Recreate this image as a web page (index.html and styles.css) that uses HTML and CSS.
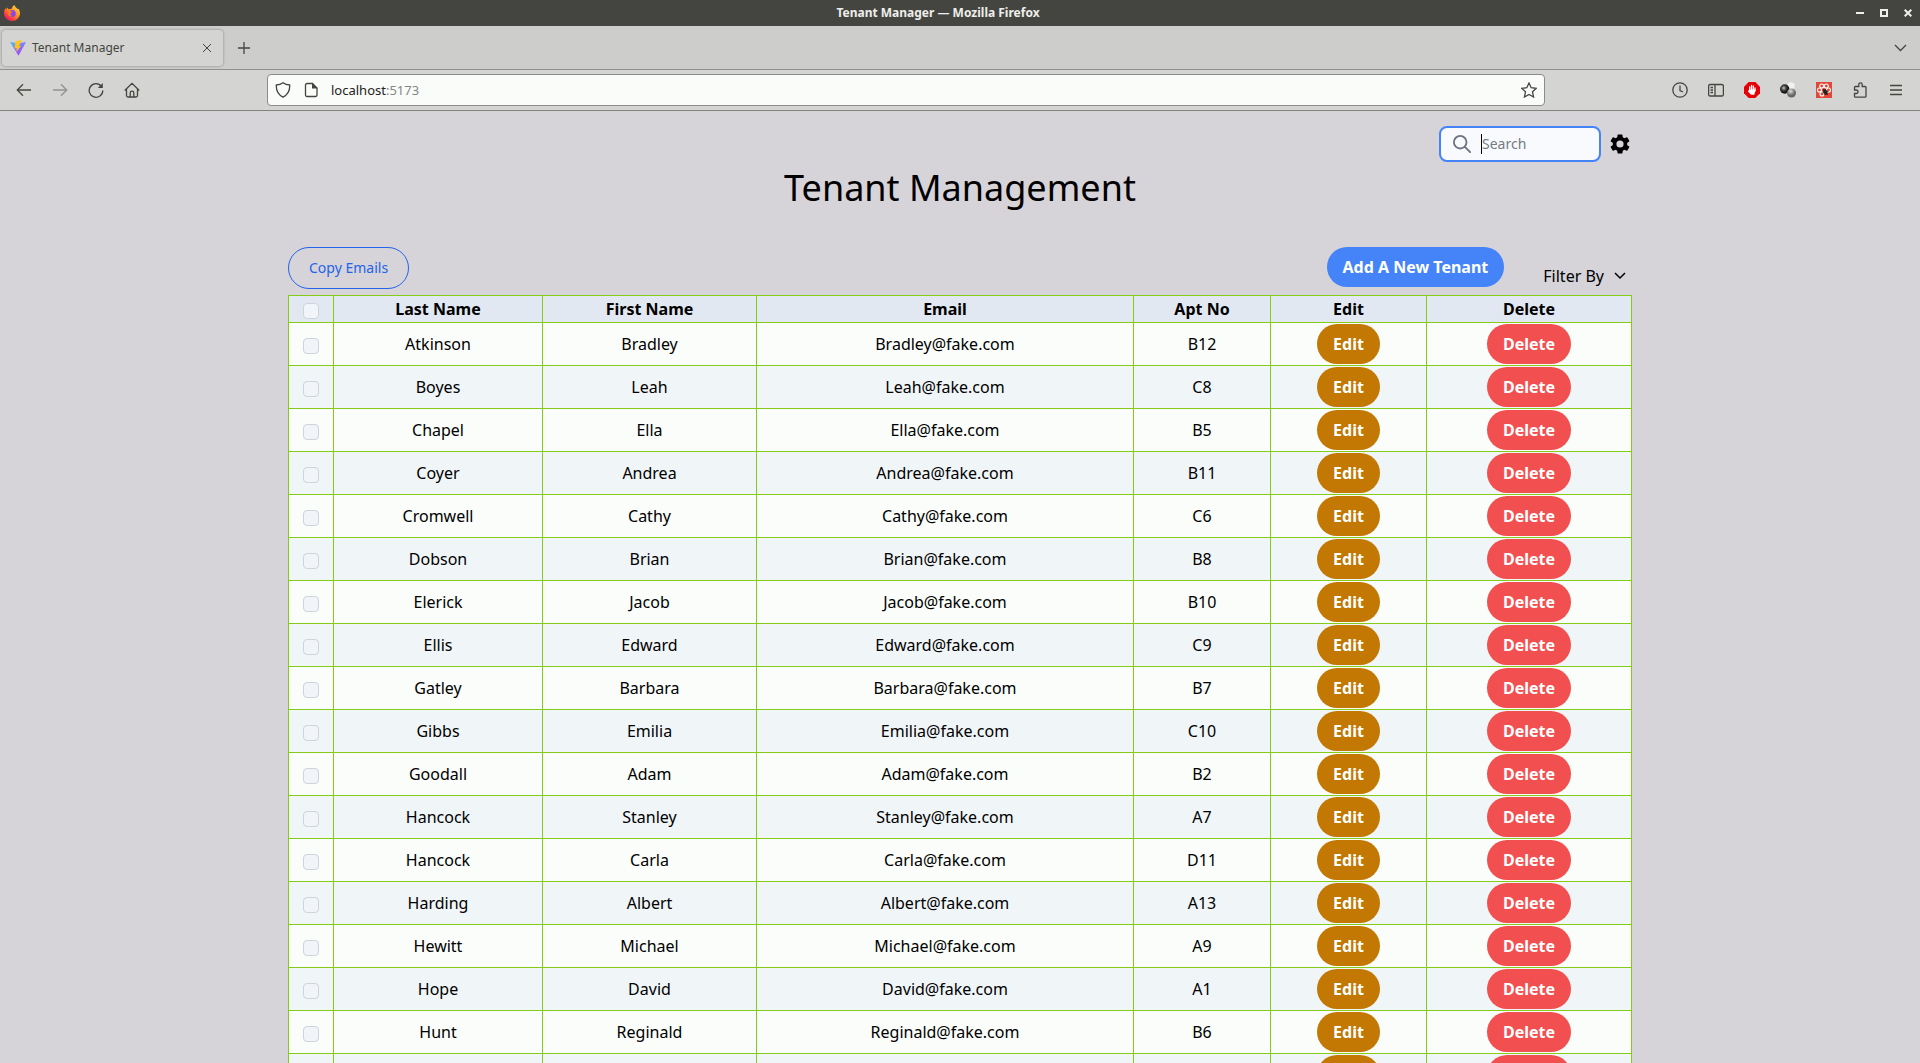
FILE: index.html
```html
<!DOCTYPE html>
<html lang="en">
<head>
<meta charset="utf-8">
<title>Tenant Manager</title>
<link rel="stylesheet" href="styles.css">
</head>
<body>
<header class="titlebar">
  <svg class="icon16" viewBox="0 0 16 16" aria-hidden="true"><defs><linearGradient id="fx" x1="1" y1="0" x2="0.2" y2="1"><stop offset="0" stop-color="#fff04a"/><stop offset="0.5" stop-color="#ff8a1f"/><stop offset="0.8" stop-color="#ff3647"/><stop offset="1" stop-color="#e5127d"/></linearGradient></defs><path d="M1.400 3 2 4.500 3.400 2.500 4.500 4.200C6 3.800 7 4 8 3.500 8 2 9 1 10.500 0c.2 1.800 2 2.600 3 4l1-.3C15.700 5.500 16 7 16 8.500A8 7.500 0 0 1 0 8.500C0 6.500.4 4.700 1.400 3z" fill="url(#fx)"/><circle cx="8.200" cy="8.500" r="3.500" fill="#8a46e8"/><path d="M3 6.500c2-1.500 4-.5 5.500.3L6.500 8.500C6 10 7 11 8.500 11 6 12.500 3.500 10.500 3 6.500z" fill="#ff7a20"/></svg>
  <div class="window-title">Tenant Manager — Mozilla Firefox</div>
  <div class="window-controls">
    <button aria-label="Minimize"><svg viewBox="0 0 8 8"><path d="M0 4h8" stroke="currentColor" stroke-width="2"/></svg></button>
    <button aria-label="Maximize"><svg viewBox="0 0 8 8"><path d="M1 1h6v6H1z" fill="none" stroke="currentColor" stroke-width="2"/></svg></button>
    <button aria-label="Close window"><svg viewBox="0 0 8 8"><path d="M.7.7l6.600 6.600M7.300.7L.7 7.300" stroke="currentColor" stroke-width="2"/></svg></button>
  </div>
</header>
<div class="tabstrip">
  <div class="tab">
    <svg class="icon16" viewBox="0 0 16 16" aria-hidden="true"><defs><linearGradient id="vt" x1="0" y1="0" x2="0.7" y2="1"><stop offset="0" stop-color="#41c4ff"/><stop offset="1" stop-color="#b935f5"/></linearGradient></defs><path d="M0 2l8 1.200L16 2 8.500 15.700z" fill="url(#vt)"/><path d="M11.500.5L5.500 1.500 5 8h2.200l-.5 3 3.800-4.700H8.600z" fill="#ffc51f" stroke="#ffc51f" stroke-width=".6"/></svg>
    <span class="tab-title">Tenant Manager</span>
    <button class="tab-close" aria-label="Close tab"><svg viewBox="0 0 10 10"><path d="M1 1l8 8M9 1l-8 8" stroke="currentColor"/></svg></button>
  </div>
  <button class="new-tab" aria-label="New tab"><svg viewBox="0 0 12 12"><path d="M6 0v12M0 6h12" stroke="currentColor" stroke-width="1.300"/></svg></button>
  <button class="all-tabs" aria-label="List all tabs"><svg viewBox="0 0 12 8"><path d="M.5 1L6 6.500 11.500 1" fill="none" stroke="currentColor" stroke-width="1.300"/></svg></button>
</div>
<nav class="navbar" aria-label="Browser toolbar">
  <div class="nav-buttons">
    <button aria-label="Back"><svg viewBox="0 0 16 16"><path d="M15 8H1.500M7 2.300L1.300 8 7 13.700"/></svg></button>
    <button aria-label="Forward" disabled><svg viewBox="0 0 16 16"><path d="M1 8h13.500M9 2.300L14.700 8 9 13.700"/></svg></button>
    <button aria-label="Reload"><svg viewBox="0 0 16 16"><path d="M13.500 4.500A6.800 6.800 0 1 0 14.800 8.500"/><path d="M14.800 1v5H9.800z" fill="currentColor" stroke="none"/></svg></button>
    <button aria-label="Home"><svg viewBox="0 0 16 16"><path d="M.7 8.500L8 1.300l7.300 7.200M2.500 7v6.500a1.500 1.500 0 0 0 1.500 1.500h8a1.500 1.500 0 0 0 1.500-1.500V7M6.200 15v-4a1.800 1.800 0 0 1 3.600 0v4"/></svg></button>
  </div>
  <div class="urlbar">
    <svg class="icon16 line" viewBox="0 0 16 16"><path d="M8 .8c2 1.500 4.300 2.100 6.700 2.200.3 5-1.200 9.400-6.700 12.200C2.500 12.400 1 8 1.300 3 3.700 2.900 6 2.300 8 .8z"/></svg>
    <svg class="icon16 line" viewBox="0 0 16 16"><path d="M4 1.500h5.500L14 6v7a1.500 1.500 0 0 1-1.500 1.500H4A1.500 1.500 0 0 1 2.500 13V3A1.500 1.500 0 0 1 4 1.500z"/><path d="M9 1v5.500h5.500z" fill="currentColor" stroke="none"/></svg>
    <span class="url">localhost<span class="port">:5173</span></span>
    <button class="star" aria-label="Bookmark this page"><svg viewBox="0 0 16 16"><path d="M8 1l2.200 4.700 5.100.6-3.800 3.500 1.100 5.200L8 12.500 3.400 15l1.100-5.200L.7 6.300l5.100-.6z"/></svg></button>
  </div>
  <div class="extensions">
    <button aria-label="History"><svg viewBox="0 0 16 16"><circle cx="8" cy="8" r="7.200"/><path d="M8 3.500v5l3 1.500"/></svg></button>
    <button aria-label="Sidebars"><svg viewBox="0 0 16 16"><rect x=".6" y="2.500" width="14.800" height="11.500" rx="1.500"/><path d="M7 2.500V14M2.500 5.500h2.500M2.500 8h2.500M2.500 10.500h2.500"/></svg></button>
    <button aria-label="Ad blocker"><svg viewBox="0 0 16 16"><path d="M4.700 0h6.600L16 4.700v6.600L11.300 16H4.700L0 11.300V4.700z" fill="#e80008" stroke="none"/><path d="M5.700 9V5M7.500 8V3.500M9.300 8V4M11 9V6" stroke="#fff" stroke-width="1.300" stroke-linecap="round"/><path d="M5 7.500h6.600L10.300 12.800H7L4 9.500z" fill="#fff" stroke="none"/></svg></button>
    <button aria-label="Container extension"><svg viewBox="0 0 16 16"><defs><radialGradient id="b1" cx=".4" cy=".4"><stop offset="0" stop-color="#ccc"/><stop offset=".5" stop-color="#444"/><stop offset="1" stop-color="#111"/></radialGradient><radialGradient id="b2" cx=".4" cy=".3"><stop offset="0" stop-color="#ddd"/><stop offset="1" stop-color="#666"/></radialGradient></defs><g stroke="none"><circle cx="11" cy="4" r="3.700" fill="#f1f1f1"/><circle cx="4.700" cy="7" r="4.700" fill="url(#b1)"/><circle cx="11.500" cy="11" r="4.500" fill="url(#b2)"/></g></svg></button>
    <button aria-label="React tools"><svg viewBox="0 0 16 16"><path d="M0 0h16v16H0z" fill="#e24838" stroke="none"/><g stroke="#fff" stroke-width="1.100"><circle cx="5.700" cy="4" r="2"/><circle cx="10.300" cy="4" r="2"/><circle cx="3.500" cy="8" r="2"/><circle cx="12.500" cy="8" r="2"/><circle cx="6" cy="12" r="2"/></g><path d="M7 7.500l1.500.5 1-1 .5 1.500 2 1-1 1 .5 2-1.500-.5-1 1-.5-1.500-1.500-1 .7-1z" fill="#222" stroke="#222" stroke-width=".8"/></svg></button>
    <button aria-label="Extensions"><svg viewBox="0 0 16 16"><path d="M2.500 8V5.500a1 1 0 0 1 1-1h3.300V2.500a1.700 1.700 0 0 1 3.400 0v2H13a1 1 0 0 1 1 1v8.700a1 1 0 0 1-1 1H3.500a1 1 0 0 1-1-1V11.500h1.800a1.700 1.700 0 0 0 0-3.500z"/></svg></button>
    <button aria-label="Menu"><svg viewBox="0 0 16 16"><path d="M2 3.500h12M2 8h12M2 12.500h12"/></svg></button>
  </div>
</nav>
<main class="page">
  <div class="container">
    <div class="topbar">
      <label class="search"><svg viewBox="0 0 20 20" aria-hidden="true"><path d="M19 19l-6-6m2-5A7 7 0 1 1 1 8a7 7 0 0 1 14 0z"/></svg><span class="caret"></span><input type="text" placeholder="Search" aria-label="Search"></label>
      <button class="settings" aria-label="Settings"><svg viewBox="2 2 20 20"><path d="M19.140 12.940c.04-.3.06-.61.06-.94 0-.32-.02-.64-.07-.94l2.030-1.580a.49.49 0 0 0 .12-.61l-1.920-3.320a.49.49 0 0 0-.59-.22l-2.390.96c-.5-.38-1.030-.7-1.620-.94l-.36-2.540a.48.48 0 0 0-.48-.41h-3.840a.48.48 0 0 0-.47.41l-.36 2.540c-.59.24-1.130.57-1.620.94l-2.390-.96a.48.48 0 0 0-.59.22L2.740 8.870a.48.48 0 0 0 .12.61l2.030 1.580c-.05.3-.09.63-.09.94s.02.64.07.94l-2.030 1.580a.49.49 0 0 0-.12.61l1.920 3.320c.12.22.37.29.59.22l2.390-.96c.5.38 1.030.7 1.620.94l.36 2.540c.05.24.24.41.48.41h3.840c.24 0 .44-.17.47-.41l.36-2.540c.59-.24 1.130-.56 1.620-.94l2.390.96c.22.08.47 0 .59-.22l1.920-3.320a.48.48 0 0 0-.12-.61zM12 15.600a3.600 3.600 0 1 1 0-7.200 3.600 3.600 0 0 1 0 7.200z"/></svg></button>
    </div>
    <h1>Tenant Management</h1>
    <div class="actions">
      <button class="copy">Copy Emails</button>
      <div class="actions-right">
        <button class="pill add">Add A New Tenant</button>
        <button class="filter">Filter By <svg viewBox="0 0 12 8"><path d="M1 1l5 5 5-5"/></svg></button>
      </div>
    </div>
    <table class="tenants">
      <colgroup><col class="c-check"><col class="c-last"><col class="c-first"><col class="c-email"><col class="c-apt"><col class="c-edit"><col class="c-delete"></colgroup>
      <thead><tr><th><input type="checkbox" aria-label="Select all"></th><th>Last Name</th><th>First Name</th><th>Email</th><th>Apt No</th><th>Edit</th><th>Delete</th></tr></thead>
      <tbody id="rows"></tbody>
    </table>
  </div>
</main>
<script src="tenants.js"></script>
</body>
</html>
```
FILE: styles.css
```css
* { box-sizing: border-box; }
body {
  margin: 0;
  height: 100vh;
  display: flex;
  flex-direction: column;
  overflow: hidden;
  font-family: "Noto Sans", sans-serif;
  font-size: 16px;
  line-height: 24px;
  color: #000;
  background: #d6d3d9;
}
button { font: inherit; color: inherit; background: none; border: 0; padding: 0; }
svg { display: block; }
.icon16 { width: 16px; height: 16px; flex: none; }

.titlebar {
  display: flex;
  align-items: center;
  height: 26px;
  flex: none;
  padding: 0 8px 0 4px;
  background: #444541;
  color: #eeeeea;
}
.window-title { flex: 1; font-size: 12px; font-weight: 700; text-align: center; }
.window-controls { display: flex; justify-content: flex-end; gap: 16px; }
.window-controls svg { width: 8px; height: 8px; }

.tabstrip {
  display: flex;
  align-items: center;
  height: 44px;
  flex: none;
  padding: 0 13px 0 2px;
  background: #cdcecb;
  border-bottom: 1px solid #90918f;
  color: #444541;
}
.tab {
  display: flex;
  align-items: center;
  gap: 6px;
  width: 221px;
  height: 36px;
  padding: 0 11px 0 8px;
  border-radius: 4px;
  background: #d4d5d2;
  box-shadow: 0 0 3px #888;
}
.tab-title { flex: 1; font-size: 12px; }
.tab-close svg { width: 10px; height: 10px; }
.new-tab { margin-left: 15px; }
.new-tab svg { width: 12px; height: 12px; }
.all-tabs { margin-left: auto; }
.all-tabs svg { width: 13px; height: 8px; }

.navbar {
  display: flex;
  align-items: center;
  height: 41px;
  flex: none;
  padding: 0 16px;
  background: #d4d5d2;
  border-bottom: 1px solid #82827f;
  color: #444541;
}
.navbar button svg { width: 16px; height: 16px; }
.navbar button svg, .line { fill: none; stroke: currentColor; stroke-width: 1.3; }
.nav-buttons, .extensions { display: flex; gap: 20px; flex: none; }
.nav-buttons button:disabled { opacity: .45; }
.urlbar {
  display: flex;
  align-items: center;
  gap: 12px;
  flex: 1;
  height: 32px;
  margin: 0 127px;
  padding: 0 7px;
  border: 1px solid #8b8c89;
  border-radius: 4px;
  background: #fafcf9;
}
.url { font-size: 13px; color: #222; }
.port { color: #858684; }
.star { margin-left: auto; }

.page { flex: 1; min-height: 0; overflow: hidden; padding-top: 15px; }
.container { width: 70%; margin: 0 auto; }
.topbar { display: flex; justify-content: flex-end; align-items: center; gap: 9px; padding-right: 2px; }
.search {
  display: flex;
  align-items: center;
  width: 162px;
  height: 36px;
  padding: 0 12px;
  border: 2px solid #4484f8;
  border-radius: 8px;
  background: #f8fafe;
}
.search svg { width: 18px; height: 18px; fill: none; stroke: #6b7280; stroke-width: 2; stroke-linecap: round; }
.search input {
  min-width: 0;
  flex: 1;
  padding: 0;
  border: 0;
  outline: 0;
  background: none;
  font: inherit;
  font-size: 14px;
}
.search input::placeholder { color: #757b83; opacity: 1; }
.caret { width: 1px; height: 20px; margin-left: 10px; background: #000; }
.settings svg { width: 20px; height: 20px; }
h1 { margin: 6px 0 0; font-size: 36px; line-height: 40px; font-weight: 400; text-align: center; }
.actions { display: flex; justify-content: space-between; margin: 39px 0 6px; }
.copy {
  padding: 10px 20px;
  border: 1px solid #2463eb;
  border-radius: 21px;
  color: #2563eb;
  font-size: 14px;
  line-height: 20px;
}
.actions-right { display: flex; align-items: flex-start; gap: 39px; }
.pill {
  display: block;
  min-height: 40px;
  padding: 8px 16px;
  border-radius: 20px;
  color: #fff;
  font-weight: 700;
}
.add { background: #4484f8; }
.filter { display: flex; align-items: center; gap: 10px; padding: 17px 6px 0 0; }
.filter svg { width: 12px; height: 8px; fill: none; stroke: #000; stroke-width: 1.5; }

.tenants { width: 100%; table-layout: fixed; border-collapse: collapse; text-align: center; }
.tenants th, .tenants td { padding: 1px; border: 1px solid #84cc16; }
.tenants thead { background: #e1e8f1; }
.tenants tbody tr { background: #fafdfa; }
.tenants tbody tr:nth-child(even) { background: #f0f5f8; }
.tenants .pill { margin: 0 auto; }
.edit { min-width: 63px; background: #c27803; }
.delete { min-width: 84px; background: #f25050; }
.tenants input {
  appearance: none;
  display: block;
  width: 16px;
  height: 16px;
  margin: 4px auto 0;
  border: 1px solid #cfd4d9;
  border-radius: 4px;
  background: #f1f5f9;
}
.c-check { width: 45px; }
.c-last { width: 209px; }
.c-first { width: 214px; }
.c-email { width: 377px; }
.c-apt { width: 137px; }
.c-edit { width: 156px; }
.c-delete { width: 205px; }
```
FILE: tenants.js
```js
const tenants = [
  ["Atkinson", "Bradley", "B12"], ["Boyes", "Leah", "C8"], ["Chapel", "Ella", "B5"],
  ["Coyer", "Andrea", "B11"], ["Cromwell", "Cathy", "C6"], ["Dobson", "Brian", "B8"],
  ["Elerick", "Jacob", "B10"], ["Ellis", "Edward", "C9"], ["Gatley", "Barbara", "B7"],
  ["Gibbs", "Emilia", "C10"], ["Goodall", "Adam", "B2"], ["Hancock", "Stanley", "A7"],
  ["Hancock", "Carla", "D11"], ["Harding", "Albert", "A13"], ["Hewitt", "Michael", "A9"],
  ["Hope", "David", "A1"], ["Hunt", "Reginald", "B6"], ["", "", ""]
];

// The trailing entry is a blank row whose buttons carry no caption.
document.getElementById("rows").innerHTML = tenants.map(([last, first, apt]) => `
  <tr>
    <td><input type="checkbox" aria-label="Select ${first} ${last}"></td>
    <td>${last}</td><td>${first}</td><td>${first && first + "@fake.com"}</td><td>${apt}</td>
    <td><button class="pill edit" aria-label="Edit ${last}">${last && "Edit"}</button></td>
    <td><button class="pill delete" aria-label="Delete ${last}">${last && "Delete"}</button></td>
  </tr>`).join("");
```
